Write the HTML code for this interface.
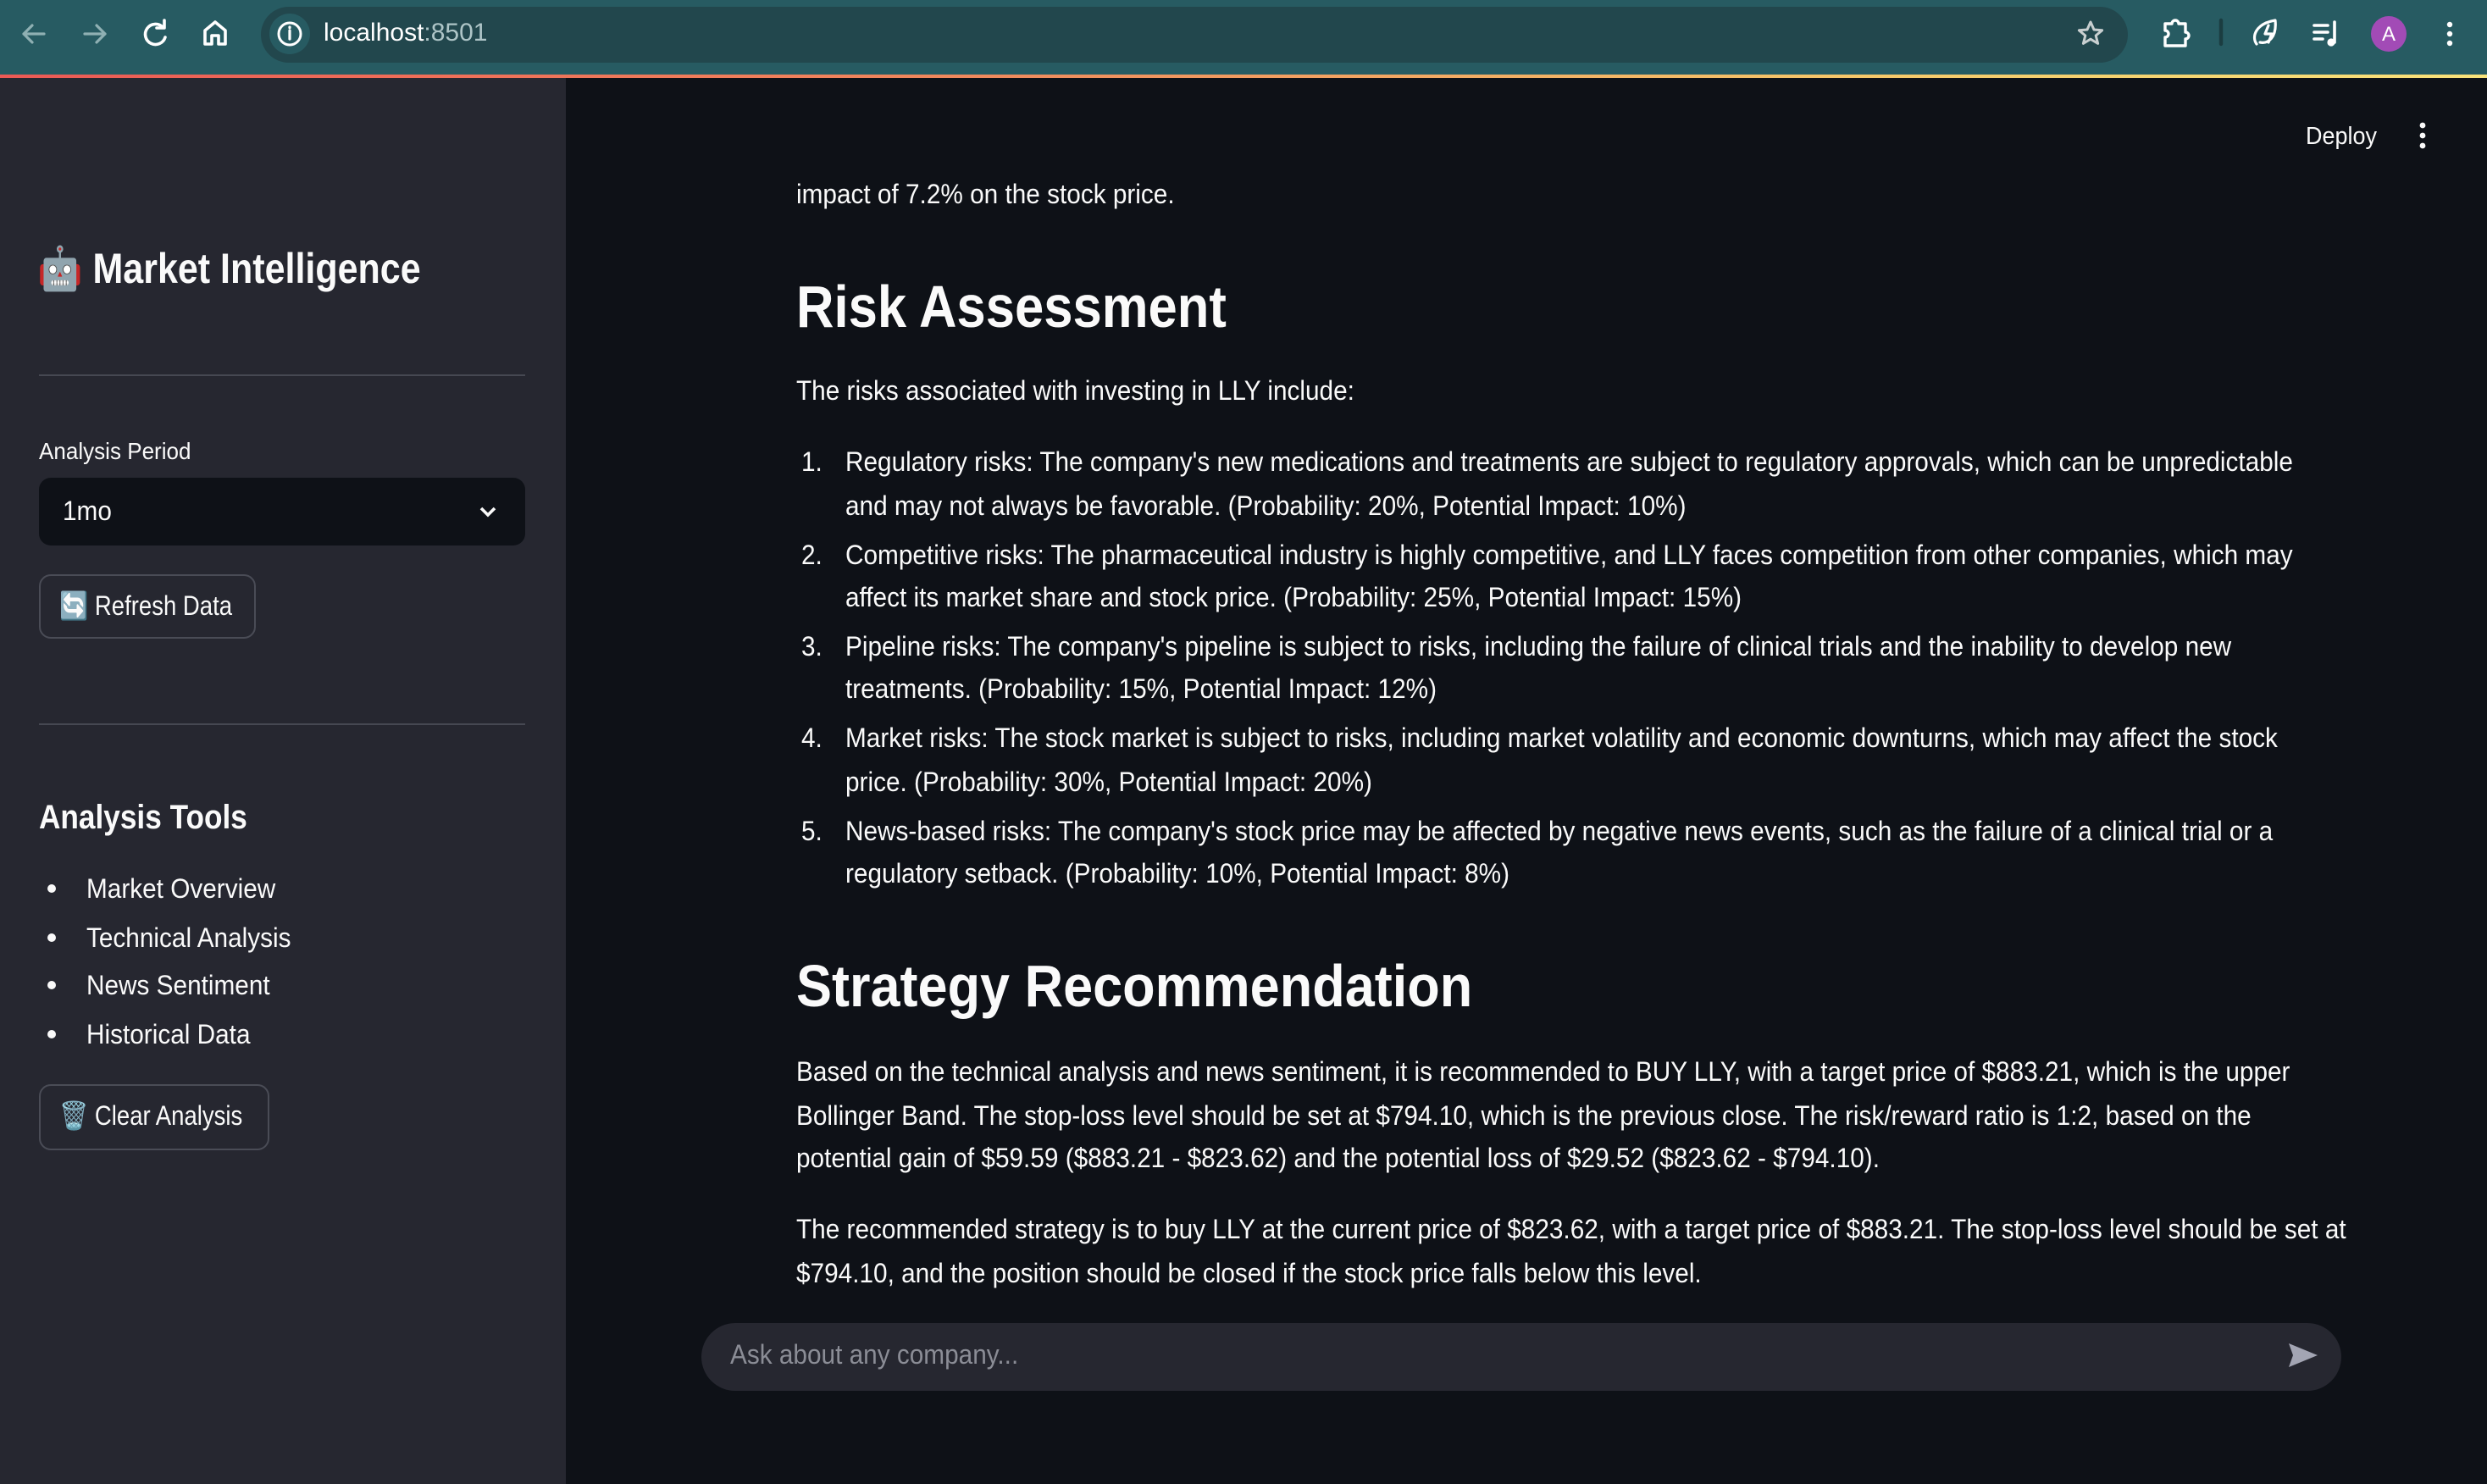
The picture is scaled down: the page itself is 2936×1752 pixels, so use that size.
<!DOCTYPE html>
<html><head><meta charset="utf-8"><style>
*{margin:0;padding:0;box-sizing:border-box}
html,body{width:2936px;height:1752px;overflow:hidden;background:#0e1117}
#r{width:1468px;height:876px;transform:scale(2);transform-origin:0 0;position:relative;font-family:"Liberation Sans",sans-serif;color:#fafafa}
.a{position:absolute;white-space:nowrap}
.sx{transform:scaleX(.93);transform-origin:left center}
.hx{transform:scaleX(.88);transform-origin:left center}
.bx{transform:scaleX(.86);transform-origin:left center}
.l{height:26px;line-height:26px;font-size:16px;margin-top:2px}
</style></head><body><div id="r">
<div class="a" style="left:0;top:0;width:1468px;height:43.5px;background:#275b62"></div>
<div class="a" style="left:0;top:43.5px;width:1468px;height:2.5px;background:linear-gradient(90deg,#ec5a55,#f08a5d 40%,#f5c86a 75%,#f8e27a)"></div>
<div class="a" style="left:154px;top:4px;width:1102px;height:33px;border-radius:17px;background:#22474d"></div>
<div class="a" style="left:159px;top:8px;width:24px;height:24px;border-radius:12px;background:#275b62"></div>
<svg class="a" style="left:0;top:0" width="1468" height="44" viewBox="0 0 1468 44" fill="none" stroke-linecap="round" stroke-linejoin="round">
<g stroke="#8fb0b3" stroke-width="1.6"><path d="M26 20H14M19 15l-5 5 5 5"/><path d="M50 20h12M57 15l5 5-5 5"/></g>
<g stroke="#fff" stroke-width="1.8"><path d="M96 16a6 6 0 1 0 1.5 6"/><path d="M97 12v4.5h-4.5"/><path d="M121 26v-8l6-5 6 5v8h-4v-5h-4v5z"/></g>
<circle cx="171" cy="20" r="6.5" stroke="#fff" stroke-width="1.5"/><path d="M171 18v5M171 16v.3" stroke="#fff" stroke-width="1.6"/>
<path d="M1234 13l2 4.5 4.8.4-3.7 3.1 1.2 4.7-4.3-2.6-4.3 2.6 1.2-4.7-3.7-3.1 4.8-.4z" stroke="#c8cfd0" stroke-width="1.5"/>
<path d="M1278 14h4a2 2 0 0 1 4 0h4v5a2 2 0 0 1 0 4v4h-12v-5a2 2 0 0 0 0-4z" stroke="#fff" stroke-width="1.7"/>
<path d="M1311 12v14" stroke="#1b3d41" stroke-width="2.2"/>
<path d="M1332 26c-3-4-1-12 11-14 1 10-4 14-9 13M1339 15l-2 5h4l-2 5" stroke="#fff" stroke-width="1.6"/>
<path d="M1366 15h8M1366 19h8M1366 23h5M1378 13v12" stroke="#fff" stroke-width="1.8"/><circle cx="1376" cy="25" r="2.3" fill="#fff"/>
<circle cx="1410" cy="20" r="10.5" fill="#a24bb6"/>
<g fill="#fff"><circle cx="1446" cy="14.5" r="1.6"/><circle cx="1446" cy="20" r="1.6"/><circle cx="1446" cy="25.5" r="1.6"/></g>
</svg>
<div class="a" style="left:1404px;top:11px;width:12px;font-size:12px;color:#fff;text-align:center;line-height:18px">A</div>
<div class="a" style="left:191px;top:10px;font-size:15px;line-height:20px;color:#fff">localhost<span style="color:#aec5c7">:8501</span></div>
<div class="a" style="left:0;top:46px;width:334px;height:830px;background:#262730"></div>
<div class="a bx" style="left:22px;top:145px;font-size:25px;font-weight:bold;line-height:28px">🤖 Market Intelligence</div>
<div class="a" style="left:22.5px;top:221px;width:287.5px;height:1px;background:#464852"></div>
<div class="a sx" style="left:22.5px;top:257px;font-size:14px;line-height:18px">Analysis Period</div>
<div class="a" style="left:22.5px;top:282px;width:287.5px;height:40px;border-radius:7px;background:#0e1117"></div>
<div class="a sx" style="left:37px;top:292px;font-size:16px;line-height:22px">1mo</div>
<svg class="a" style="left:282px;top:296px" width="12" height="12" viewBox="0 0 12 12"><path d="M2 4l4 4 4-4" stroke="#fafafa" stroke-width="1.8" fill="none"/></svg>
<div class="a" style="left:22.5px;top:339px;width:128.5px;height:38px;border-radius:7px;border:1px solid #4a4c56"></div>
<div class="a bx" style="left:35px;top:348px;font-size:16px;line-height:22px">🔄 Refresh Data</div>
<div class="a" style="left:22.5px;top:427px;width:287.5px;height:1px;background:#464852"></div>
<div class="a hx" style="left:22.5px;top:471px;font-size:20px;font-weight:bold;line-height:24px">Analysis Tools</div>
<div class="a" style="left:28px;top:522px;width:5px;height:5px;border-radius:3px;background:#fafafa"></div>
<div class="a" style="left:28px;top:551px;width:5px;height:5px;border-radius:3px;background:#fafafa"></div>
<div class="a" style="left:28px;top:579px;width:5px;height:5px;border-radius:3px;background:#fafafa"></div>
<div class="a" style="left:28px;top:608px;width:5px;height:5px;border-radius:3px;background:#fafafa"></div>
<div class="a sx l" style="left:51px;top:511px">Market Overview</div>
<div class="a sx l" style="left:51px;top:540px">Technical Analysis</div>
<div class="a sx l" style="left:51px;top:568px">News Sentiment</div>
<div class="a sx l" style="left:51px;top:597px">Historical Data</div>
<div class="a" style="left:22.5px;top:640px;width:136.5px;height:39px;border-radius:7px;border:1px solid #4a4c56"></div>
<div class="a bx" style="left:35px;top:649px;font-size:16px;line-height:22px">🗑️ Clear Analysis</div>
<div class="a sx" style="left:1361px;top:71px;font-size:14.5px;line-height:20px">Deploy</div>
<svg class="a" style="left:1424px;top:70px" width="12" height="20"><g fill="#fafafa"><circle cx="6" cy="4" r="1.7"/><circle cx="6" cy="10" r="1.7"/><circle cx="6" cy="16" r="1.7"/></g></svg>
<div class="a sx l" style="left:470px;top:101px">impact of 7.2% on the stock price.</div>
<div class="a hx" style="left:470px;top:161px;font-size:35px;font-weight:bold;line-height:42px">Risk Assessment</div>
<div class="a sx l" style="left:470px;top:217px">The risks associated with investing in LLY include:</div>
<div class="a sx l" style="left:473px;top:259px">1.</div>
<div class="a sx l" style="left:499px;top:259px">Regulatory risks: The company's new medications and treatments are subject to regulatory approvals, which can be unpredictable</div>
<div class="a sx l" style="left:499px;top:285px">and may not always be favorable. (Probability: 20%, Potential Impact: 10%)</div>
<div class="a sx l" style="left:473px;top:314px">2.</div>
<div class="a sx l" style="left:499px;top:314px">Competitive risks: The pharmaceutical industry is highly competitive, and LLY faces competition from other companies, which may</div>
<div class="a sx l" style="left:499px;top:339px">affect its market share and stock price. (Probability: 25%, Potential Impact: 15%)</div>
<div class="a sx l" style="left:473px;top:368px">3.</div>
<div class="a sx l" style="left:499px;top:368px">Pipeline risks: The company's pipeline is subject to risks, including the failure of clinical trials and the inability to develop new</div>
<div class="a sx l" style="left:499px;top:393px">treatments. (Probability: 15%, Potential Impact: 12%)</div>
<div class="a sx l" style="left:473px;top:422px">4.</div>
<div class="a sx l" style="left:499px;top:422px">Market risks: The stock market is subject to risks, including market volatility and economic downturns, which may affect the stock</div>
<div class="a sx l" style="left:499px;top:448px">price. (Probability: 30%, Potential Impact: 20%)</div>
<div class="a sx l" style="left:473px;top:477px">5.</div>
<div class="a sx l" style="left:499px;top:477px">News-based risks: The company's stock price may be affected by negative news events, such as the failure of a clinical trial or a</div>
<div class="a sx l" style="left:499px;top:502px">regulatory setback. (Probability: 10%, Potential Impact: 8%)</div>
<div class="a" style="left:470px;top:562px;font-size:35px;font-weight:bold;line-height:42px;transform:scaleX(.9);transform-origin:left center">Strategy Recommendation</div>
<div class="a sx l" style="left:470px;top:619px">Based on the technical analysis and news sentiment, it is recommended to BUY LLY, with a target price of $883.21, which is the upper</div>
<div class="a sx l" style="left:470px;top:645px">Bollinger Band. The stop-loss level should be set at $794.10, which is the previous close. The risk/reward ratio is 1:2, based on the</div>
<div class="a sx l" style="left:470px;top:670px">potential gain of $59.59 ($883.21 - $823.62) and the potential loss of $29.52 ($823.62 - $794.10).</div>
<div class="a sx l" style="left:470px;top:712px">The recommended strategy is to buy LLY at the current price of $823.62, with a target price of $883.21. The stop-loss level should be set at</div>
<div class="a sx l" style="left:470px;top:738px">$794.10, and the position should be closed if the stock price falls below this level.</div>
<div class="a" style="left:414px;top:781px;width:968px;height:39.5px;border-radius:20px;background:#262730"></div>
<div class="a sx l" style="left:431px;top:786px;color:#8b8d96">Ask about any company...</div>
<svg class="a" style="left:1349px;top:790px" width="20" height="20" viewBox="0 0 20 20"><path d="M2 3l17 7-17 7 2.5-7z" fill="#a3a5b3"/></svg>
</div></body></html>
